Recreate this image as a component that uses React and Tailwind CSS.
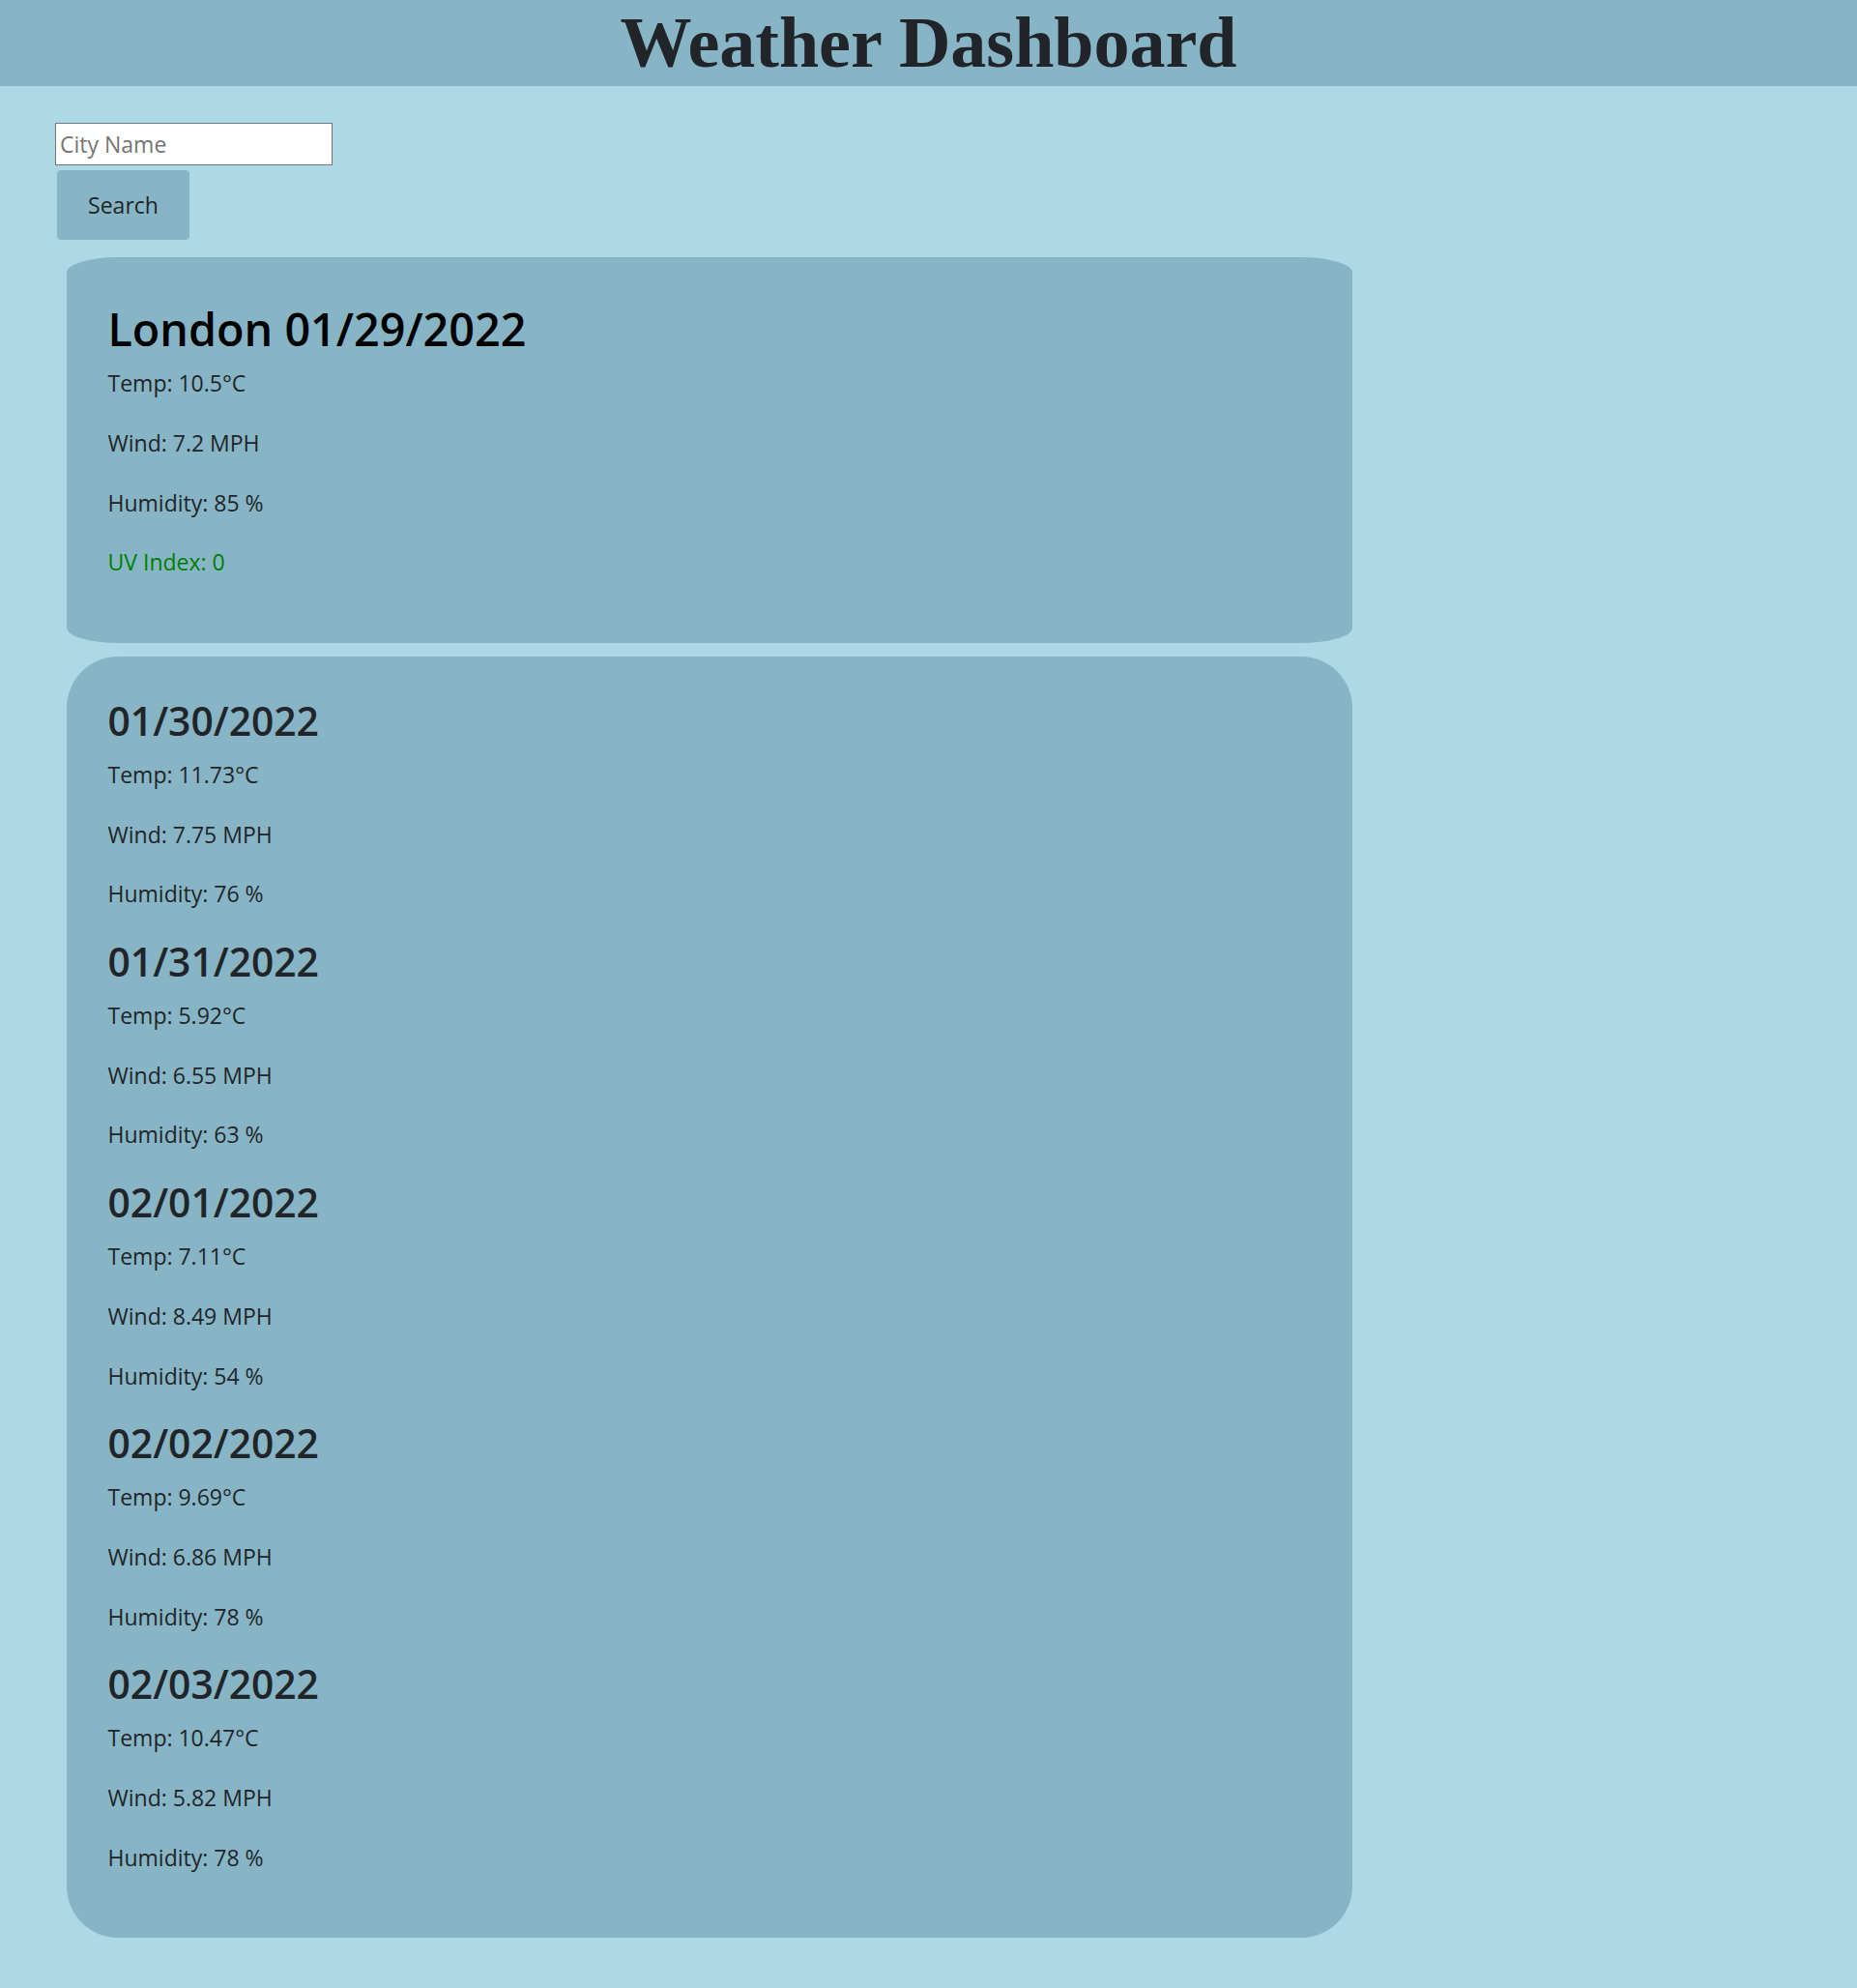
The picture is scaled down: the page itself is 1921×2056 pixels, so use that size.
const current = {
  city: 'London',
  date: '01/29/2022',
  temp: '10.5',
  wind: '7.2',
  humidity: '85',
  uv: '0',
};

const forecast = [
  { date: '01/30/2022', temp: '11.73', wind: '7.75', humidity: '76' },
  { date: '01/31/2022', temp: '5.92', wind: '6.55', humidity: '63' },
  { date: '02/01/2022', temp: '7.11', wind: '8.49', humidity: '54' },
  { date: '02/02/2022', temp: '9.69', wind: '6.86', humidity: '78' },
  { date: '02/03/2022', temp: '10.47', wind: '5.82', humidity: '78' },
];

function Stat({ children, className = 'text-[#212529]' }) {
  return <p className={`text-[23px] leading-[37px] mb-[24.7px] ${className}`}>{children}</p>;
}

export default function App() {
  return (
    <div className="min-h-screen bg-[#add8e6] font-['Open_Sans',sans-serif] pb-[52px]">
      {/* Header */}
      <header className="h-[89px] bg-[#87b5c5]">
        <h1 className="text-center font-['Liberation_Serif',serif] font-bold text-[74px] leading-[89px] text-[#212529]">
          Weather Dashboard
        </h1>
      </header>

      {/* Search */}
      <div className="pt-[38px] flex flex-col items-start">
        <input
          type="text"
          placeholder="City Name"
          className="ml-[57px] w-[287px] h-[44px] bg-white border border-[#767676] px-[4px] text-[23px] text-[#212529] placeholder:text-[#757575] outline-none"
        />
        <button className="ml-[59px] mt-[5px] w-[137px] h-[72px] rounded-[4px] bg-[#87b5c5] text-[23px] text-[#212529]">
          Search
        </button>
      </div>

      {/* Current weather */}
      <section className="ml-[69px] w-[1330px] mt-[18px] bg-[#87b5c5] rounded-[4%] pl-[42.5px] pt-[45.6px] pb-[39.9px]">
        <h2 className="text-[46.7px] leading-[56.4px] font-semibold text-black mb-[10.3px]">
          {current.city} {current.date}
        </h2>
        <Stat>Temp: {current.temp}°C</Stat>
        <Stat>Wind: {current.wind} MPH</Stat>
        <Stat>Humidity: {current.humidity} %</Stat>
        <Stat className="text-[#008000]">UV Index: {current.uv}</Stat>
      </section>

      {/* 5 day forecast */}
      <section className="ml-[69px] w-[1330px] mt-[14px] bg-[#87b5c5] rounded-[4%] pl-[42.5px] pt-[40.1px] pb-[39.4px]">
        {forecast.map((day) => (
          <div key={day.date}>
            <h3 className="text-[40.8px] leading-[52px] font-semibold text-[#212529] mb-[12px]">{day.date}</h3>
            <Stat>Temp: {day.temp}°C</Stat>
            <Stat>Wind: {day.wind} MPH</Stat>
            <Stat>Humidity: {day.humidity} %</Stat>
          </div>
        ))}
      </section>
    </div>
  );
}
